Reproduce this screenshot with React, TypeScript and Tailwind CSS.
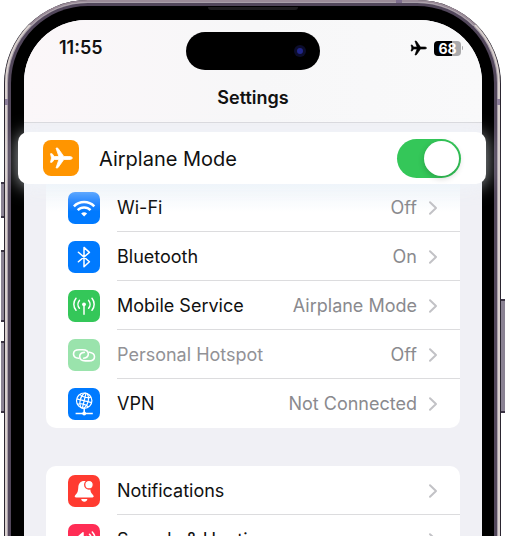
import { useState, type ReactNode } from "react";

function PlaneGlyph({ className }: { className: string }) {
  return (
    <svg viewBox="0 0 24 22" className={className} fill="currentColor" stroke="currentColor" strokeWidth="0.8" strokeLinejoin="round" aria-hidden="true">
      <path d="M23.4 11c0 .9-1.500 1.500-3.500 1.500h-5.100L9.200 20.400c-.2.3-.5.5-.9.5H7l2.900-8.400H5.200L3.100 15.300H1.500L2.500 11 1.500 6.700h1.600l2.100 2.800h4.700L7 1.100h1.300c.4 0 .7.2.9.5l5.600 7.900h5.100c2 0 3.500.6 3.500 1.500z" />
    </svg>
  );
}

function WifiGlyph() {
  return (
    <svg viewBox="0 0 32 32" className="size-8" fill="none" stroke="white" strokeWidth="2.5" aria-hidden="true">
      <path d="M5.9 14.3a14.3 14.3 0 0 1 20.4 0" />
      <path d="M9.7 18.2a8.9 8.9 0 0 1 12.8 0" />
      <path d="M16.1 24.6l-3-3a4.3 4.3 0 0 1 6 0z" fill="white" stroke="none" />
    </svg>
  );
}

function BluetoothGlyph() {
  return (
    <svg viewBox="0 0 32 32" className="size-8" fill="none" stroke="white" strokeWidth="1.5" strokeLinejoin="round" strokeLinecap="round" aria-hidden="true">
      <path d="M10.4 11.2l11 9.6-5.400 5V6.400l5.400 5-11 9.400" />
    </svg>
  );
}

function AntennaGlyph() {
  return (
    <svg viewBox="0 0 32 32" className="size-8" fill="none" stroke="white" strokeWidth="1.5" strokeLinecap="round" aria-hidden="true">
      <circle cx="16" cy="14.3" r="1.9" fill="white" stroke="none" />
      <path d="M16 15v9.3" />
      <path d="M11.4 10.4a6 6 0 0 0 0 7.8M20.6 10.4a6 6 0 0 1 0 7.8" />
      <path d="M8 8.300a9.400 9.400 0 0 0 0 12M24 8.300a9.400 9.400 0 0 1 0 12" />
    </svg>
  );
}

function HotspotGlyph() {
  return (
    <svg viewBox="0 0 32 32" className="size-8" fill="none" stroke="white" strokeWidth="1.6" strokeLinecap="round" aria-hidden="true">
      <path d="M10.6 19.300C7.800 18.900 5.500 17.300 5.500 14.900c0-2.600 2.400-4.200 5.600-4.200h3.600c3.400 0 5.600 1.800 5.600 4.300 0 2.100-1.700 3.900-4.600 4.200" />
      <path d="M21.400 13.300c2.900.5 5.100 2 5.100 4.400 0 2.600-2.400 4.200-5.600 4.200h-3.600c-3.400 0-5.600-1.800-5.600-4.300 0-2.100 1.700-3.900 4.600-4.200" />
    </svg>
  );
}

function VpnGlyph() {
  return (
    <svg viewBox="0 0 32 32" className="size-8" fill="none" stroke="white" strokeWidth="1.200" aria-hidden="true">
      <circle cx="16.200" cy="12.700" r="7.700" />
      <g transform="rotate(14 16.200 12.700)">
        <path d="M16.200 5v15.400M8.500 12.700h15.400M10.600 7.600c3 2.100 8.200 2.100 11.200 0M10.600 17.800c3-2.100 8.200-2.100 11.200 0" />
        <ellipse cx="16.200" cy="12.700" rx="4" ry="7.700" />
      </g>
      <path d="M16.200 20.400v4M7.600 25.500h17.200" strokeWidth="1.500" />
      <circle cx="16.200" cy="25.500" r="1.900" fill="white" stroke="none" />
    </svg>
  );
}

function BellGlyph() {
  return (
    <svg viewBox="0 0 32 32" className="size-8" fill="white" aria-hidden="true">
      <path d="M16.200 6c-3.700 0-5.700 2.700-5.900 6.200-.2 3.500-.6 5.300-2.300 7-.8.800-1.300 1.500-1.300 2.100 0 .7.500 1.100 1.200 1.100h16.600c.7 0 1.200-.4 1.200-1.100 0-.6-.5-1.300-1.300-2.100-1.700-1.700-2.100-3.500-2.300-7C21.900 8.700 19.900 6 16.200 6z" />
      <path d="M13.200 24h6.200c-.3 1.700-1.500 2.700-3.100 2.700S13.500 25.700 13.200 24z" />
      <circle cx="21" cy="9.700" r="4.300" stroke="#ff3b30" strokeWidth="1.300" />
    </svg>
  );
}

function SpeakerGlyph() {
  return (
    <svg viewBox="0 0 32 32" className="size-8" fill="none" stroke="white" strokeWidth="1.500" strokeLinecap="round" aria-hidden="true">
      <path d="M6 13.500h3.500L15 8.700v14.600l-5.500-4.800H6z" fill="white" strokeLinejoin="round" />
      <path d="M18.500 12.500a5 5 0 0 1 0 7M21.500 10.200a8.500 8.500 0 0 1 0 11.600M24.300 8a12 12 0 0 1 0 16" />
    </svg>
  );
}

function Chevron() {
  return (
    <svg viewBox="0 0 10 16" className="h-4 w-2.5 shrink-0" fill="none" stroke="#c2c2c6" strokeWidth="2" strokeLinecap="round" strokeLinejoin="round" aria-hidden="true">
      <path d="M2 2.200l6 5.800-6 5.800" />
    </svg>
  );
}

type RowProps = {
  icon: ReactNode;
  tint: string;
  label: string;
  value?: string;
  muted?: boolean;
};

function Row({ icon, tint, label, value, muted }: RowProps) {
  return (
    <li className="group">
      <a href="#" className="flex h-[49px] items-center pl-[22px]">
        <span className={`flex size-8 shrink-0 items-center justify-center rounded-[7px] ${tint}`}>{icon}</span>
        <span className="ml-[17px] flex h-full flex-1 items-center border-b border-[#dcdcde] pt-0.5 pr-[22px] group-last:border-transparent">
          <span className={`flex-1 whitespace-nowrap ${muted ? "text-[#929296]" : "text-[#111]"}`}>{label}</span>
          {value && <span className="mr-[11px] whitespace-nowrap text-[#8a8a8e]">{value}</span>}
          <Chevron />
        </span>
      </a>
    </li>
  );
}

function SideButton({ className }: { className: string }) {
  return <span className={`absolute w-1 border-y-2 border-[#3b3444] bg-[#8b8394] ${className}`} />;
}

export default function App() {
  const [airplane, setAirplane] = useState(true);

  return (
    <div className="relative h-screen overflow-hidden bg-white px-1 font-['Inter','Liberation_Sans',sans-serif] text-lg">
      <SideButton className="top-[182px] left-px h-9" />
      <SideButton className="top-[250px] left-px h-[72px]" />
      <SideButton className="top-[341px] left-px h-[72px]" />
      <SideButton className="top-[299px] right-0 h-[114px]" />

      <div className="relative rounded-t-[84px] border-x border-[#2b2631] bg-[#2b2631]">
        <span className="absolute top-[99px] left-0 z-10 h-1.5 w-[3px] bg-[#8d7f9a]" />
        <span className="absolute top-[99px] right-0 z-10 h-1.5 w-[3px] bg-[#8d7f9a]" />
        <span className="absolute top-0 right-[98px] z-10 h-[3px] w-1.5 bg-[#7d6d8c]" />
        <span className="absolute inset-x-0 top-[7px] z-10 mx-auto h-[3px] w-[90px] rounded-b bg-[#1c1b1d]" />
        <div className="rounded-t-[83px] border-2 border-b-0 border-t-[#9a8b98] border-x-[#d9d0ce] bg-[#d9d0ce]">
          <div className="rounded-t-[81px] border border-b-0 border-[#a89fa9] bg-[#a89fa9]">
            <div className="rounded-t-[80px] border-[3px] border-b-0 border-[#52475b] bg-black pt-3.5 pr-3 pl-[13px]">
              <main className="min-h-screen rounded-t-[62px] bg-[#f0f0f5]">
                <header className="rounded-t-[62px] border-b border-[#d8d8dc] bg-linear-to-r from-[#fbf7f9] via-[#f7f7f8] to-[#f9f9fa] pt-3 pb-2.5">
                  <div className="grid h-[38px] grid-cols-[1fr_134px_1fr]">
                    <time className="mt-1 pl-[35px] leading-6 font-semibold text-[#111]">11:55</time>
                    <div className="flex items-center justify-end rounded-full bg-black pr-3.5">
                      <span className="flex size-3 items-center justify-center rounded-full bg-[#0c0d2c]">
                        <span className="size-1.5 rounded-full bg-[#20268a]" />
                      </span>
                    </div>
                    <div className="mt-1 flex h-6 items-center justify-end gap-[7px] pr-[19px]">
                      <PlaneGlyph className="h-4 w-[17px] text-black" />
                      <div className="flex items-center gap-px">
                        <span className="h-[15px] w-[27px] rounded-[4px] bg-linear-to-r from-black from-68% to-[#a9a9ab] to-68% text-center text-[14px] leading-[15px] font-bold text-white">68</span>
                        <span className="h-1 w-px rounded-r bg-[#a9a9ab]" />
                      </div>
                    </div>
                  </div>
                  <h1 className="mt-3.5 text-center leading-7 font-semibold text-[#111]">Settings</h1>
                </header>

                <div className="relative z-10 mt-[9px] -mr-1 -ml-1.5 flex h-[52px] items-center rounded-[10px] bg-white pr-[25px] pl-[25px] shadow-[0_2px_18px_rgba(240,246,252,0.7)]">
                  <span className="flex size-9 items-center justify-center rounded-lg bg-[#ff9500]">
                    <PlaneGlyph className="h-[22px] w-6 text-white" />
                  </span>
                  <label htmlFor="airplane" className="ml-5 flex-1 pt-0.5 text-xl text-[#111]">Airplane Mode</label>
                  <span className="relative h-[39px] w-16">
                    <input
                      id="airplane"
                      type="checkbox"
                      role="switch"
                      checked={airplane}
                      onChange={(e) => setAirplane(e.target.checked)}
                      className="peer block h-full w-full cursor-pointer appearance-none rounded-full bg-[#d9d9dd] checked:bg-[#34c759]"
                    />
                    <span className="pointer-events-none absolute top-[2px] left-[2px] size-[35px] rounded-full bg-white shadow-[0_2px_6px_rgba(0,0,0,0.2)] peer-checked:right-[2px] peer-checked:left-auto" />
                  </span>
                </div>

                <ul className="-mt-px mr-[22px] ml-[22px] rounded-b-[10px] bg-linear-to-b from-[#eff4f9] to-white to-12%">
                  <Row icon={<WifiGlyph />} tint="bg-linear-to-b from-[#4298ff] to-[#007aff] to-60%" label="Wi-Fi" value="Off" />
                  <Row icon={<BluetoothGlyph />} tint="bg-[#007aff]" label="Bluetooth" value="On" />
                  <Row icon={<AntennaGlyph />} tint="bg-[#34c759]" label="Mobile Service" value="Airplane Mode" />
                  <Row icon={<HotspotGlyph />} tint="bg-[#9ae3ac]" label="Personal Hotspot" value="Off" muted />
                  <Row icon={<VpnGlyph />} tint="bg-[#007aff]" label="VPN" value="Not Connected" />
                </ul>

                <ul className="mx-[22px] mt-[38px] rounded-[10px] bg-white">
                  <Row icon={<BellGlyph />} tint="bg-[#ff3b30]" label="Notifications" />
                  <Row icon={<SpeakerGlyph />} tint="bg-[#ff2d55]" label="Sounds & Haptics" />
                </ul>
              </main>
            </div>
          </div>
        </div>
      </div>
    </div>
  );
}
